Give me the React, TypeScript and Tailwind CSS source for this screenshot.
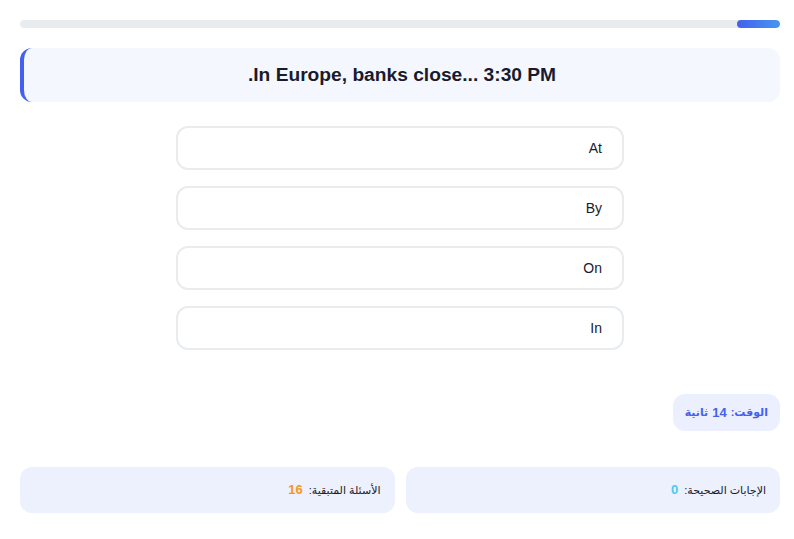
import React from "react";

export default function App() {
  const options = ["At", "By", "On", "In"];
  return (
    <div className="w-[794px] h-[539px] overflow-hidden bg-white">
      <div dir="rtl" className="bg-white w-[800px] px-5 pt-5" style={{ fontFamily: '"Liberation Sans", "DejaVu Sans", Arial, sans-serif' }}>
        <div className="h-2 w-full rounded-full bg-[#e9ecef] overflow-hidden flex">
          <div className="h-full w-[43px] rounded-full bg-gradient-to-l from-[#4895ef] to-[#4361ee]" />
        </div>
        <div className="mt-5 h-[54px] rounded-xl bg-[#f4f7fe] border-l-4 border-[#4361ee] flex items-center justify-center">
          <div className="text-[19.2px] font-bold text-[#1a1a2e]">In Europe, banks close... 3:30 PM.</div>
        </div>
        <div className="mt-6 flex flex-col items-center gap-4">
          {options.map((o) => (
            <div key={o} className="w-[448px] h-[44px] rounded-xl border-2 border-[#e9ecef] bg-white flex items-center px-5 text-[14px] text-[#1a1a2e]">
              {o}
            </div>
          ))}
        </div>
        <div className="mt-[44px] flex">
          <div className="h-[37px] px-3 rounded-xl bg-[#eceffe] flex items-center text-[11px] font-bold text-[#4361ee]">
            <span>الوقت: </span>
            <span className="text-[13px] mx-1">14</span>
            <span>ثانية</span>
          </div>
        </div>
        <div className="mt-9 grid grid-cols-2 gap-[11px]">
          <div className="h-[46px] rounded-xl bg-[#edf0fd] flex items-center px-[14px] text-[11px] text-[#1a1a2e]">
            <span>الإجابات الصحيحة: </span>
            <span className="font-bold text-[13px] text-[#4cc9f0] mr-1.5">0</span>
          </div>
          <div className="h-[46px] rounded-xl bg-[#edf0fd] flex items-center px-[14px] text-[11px] text-[#1a1a2e]">
            <span>الأسئلة المتبقية: </span>
            <span className="font-bold text-[13px] text-[#f8961e] mr-1.5">16</span>
          </div>
        </div>
      </div>
    </div>
  );
}
